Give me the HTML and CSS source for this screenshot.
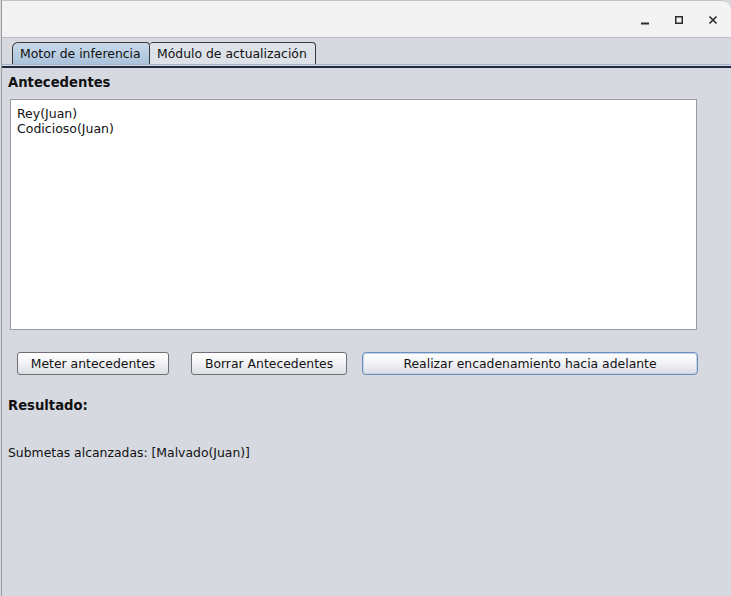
FILE: index.html
```html
<!DOCTYPE html>
<html>
<head>
<meta charset="utf-8">
<link rel="stylesheet" href="styles.css">
</head>
<body>
<div class="window">
  <div class="titlebar">
    <div class="controls">
      <svg class="ctl" width="12" height="12" viewBox="0 0 12 12"><rect x="2" y="8.5" width="8" height="2" fill="#2b2b2b"/></svg>
      <svg class="ctl" width="12" height="12" viewBox="0 0 12 12"><rect x="2.75" y="2.75" width="6.5" height="6.5" fill="none" stroke="#2b2b2b" stroke-width="1.5"/></svg>
      <svg class="ctl" width="12" height="12" viewBox="0 0 12 12"><path d="M2.5 2.5 L9.5 9.5 M9.5 2.5 L2.5 9.5" stroke="#2b2b2b" stroke-width="1.6"/></svg>
    </div>
  </div>
  <div class="tabstrip">
    <div class="tab selected">Motor de inferencia</div>
    <div class="tab">Módulo de actualización</div>
  </div>
  <div class="tabline"></div>
  <div class="panel">
    <div class="heading first">Antecedentes</div>
    <div class="textarea">Rey(Juan)<br>Codicioso(Juan)</div>
    <div class="buttons">
      <div class="btn b1">Meter antecedentes</div>
      <div class="btn b2">Borrar Antecedentes</div>
      <div class="btn b3 focused">Realizar encadenamiento hacia adelante</div>
    </div>
    <div class="heading second">Resultado:</div>
    <div class="result">Submetas alcanzadas: [Malvado(Juan)]</div>
  </div>
</div>
</body>
</html>
```
FILE: styles.css
```css
html, body {
  margin: 0;
  padding: 0;
}
body {
  width: 731px;
  height: 596px;
  overflow: hidden;
  background: #d6d9e0;
  font-family: "DejaVu Sans", sans-serif;
  font-size: 12px;
  color: #111;
}
.window {
  width: 730px;
  height: 596px;
  box-sizing: border-box;
  border-left: 1px solid #9c9c9c;
  margin-left: 1px;
  background: #d6d9e0;
}
.titlebar {
  height: 36px;
  background: #f3f3f3;
  border-top: 1px solid #c4c4c4;
  border-bottom: 1px solid #bdbdbd;
  border-top-right-radius: 9px;
  display: flex;
  justify-content: flex-end;
  align-items: center;
}
.controls {
  display: flex;
  gap: 22px;
  margin-right: 12px;
  margin-top: 1px;
}
.ctl {
  display: block;
}
.tabstrip {
  display: flex;
  padding-left: 10px;
  padding-top: 4px;
  height: 22px;
  background: #d6d9e0;
}
.tab {
  box-sizing: border-box;
  height: 22px;
  white-space: nowrap;
  border: 1px solid #3a3a3a;
  border-bottom: none;
  border-top-right-radius: 4px;
  padding: 0 0 0 7px;
  line-height: 21px;
  font-size: 12.4px;
  background: #dde1e8;
  color: #111;
  flex: none;
}
.tab.selected {
  border-top-left-radius: 6px;
  background: linear-gradient(#cad9ea, #a9c2da);
  padding-left: 7px;
  width: 138px;
}
.tab + .tab {
  border-left: none;
  width: 166px;
  border-top-left-radius: 3px;
}
.tabline {
  height: 1px;
  background: #a5b6cc;
  border-bottom: 1px solid #d6d9e0;
  box-shadow: 0 2px 0 #1d2740;
  margin-bottom: 2px;
}
.panel {
  padding-left: 6px;
  display: flex;
  flex-direction: column;
}
.heading {
  font-weight: bold;
  font-size: 13.2px;
  line-height: 16px;
  white-space: nowrap;
}
.heading.first {
  margin-top: 7px;
}
.textarea {
  margin-top: 8px;
  margin-left: 2px;
  width: 687px;
  height: 231px;
  box-sizing: border-box;
  background: #fff;
  border: 1px solid #9b9ba3;
  padding: 6px 6px;
  line-height: 15px;
  font-size: 12.5px;
}
.buttons {
  display: flex;
  margin-top: 22px;
  margin-left: 9px;
}
.btn {
  box-sizing: border-box;
  height: 23px;
  border: 1px solid #6e6e74;
  border-radius: 3px;
  background: linear-gradient(#ffffff, #f1f2f5 50%, #dcdee4);
  text-align: center;
  line-height: 21px;
  font-size: 12.4px;
  color: #111;
  white-space: nowrap;
}
.b1 { width: 152px; }
.b2 { width: 156px; margin-left: 22px; }
.b3 { width: 336px; margin-left: 15px; border-radius: 4px; }
.btn.focused {
  border-color: #6a8fbf;
  box-shadow: inset 0 0 0 1px #c3d3e6;
}
.heading.second {
  margin-top: 23px;
}
.result {
  margin-top: 31px;
  font-size: 12.4px;
  line-height: 16px;
}
```
